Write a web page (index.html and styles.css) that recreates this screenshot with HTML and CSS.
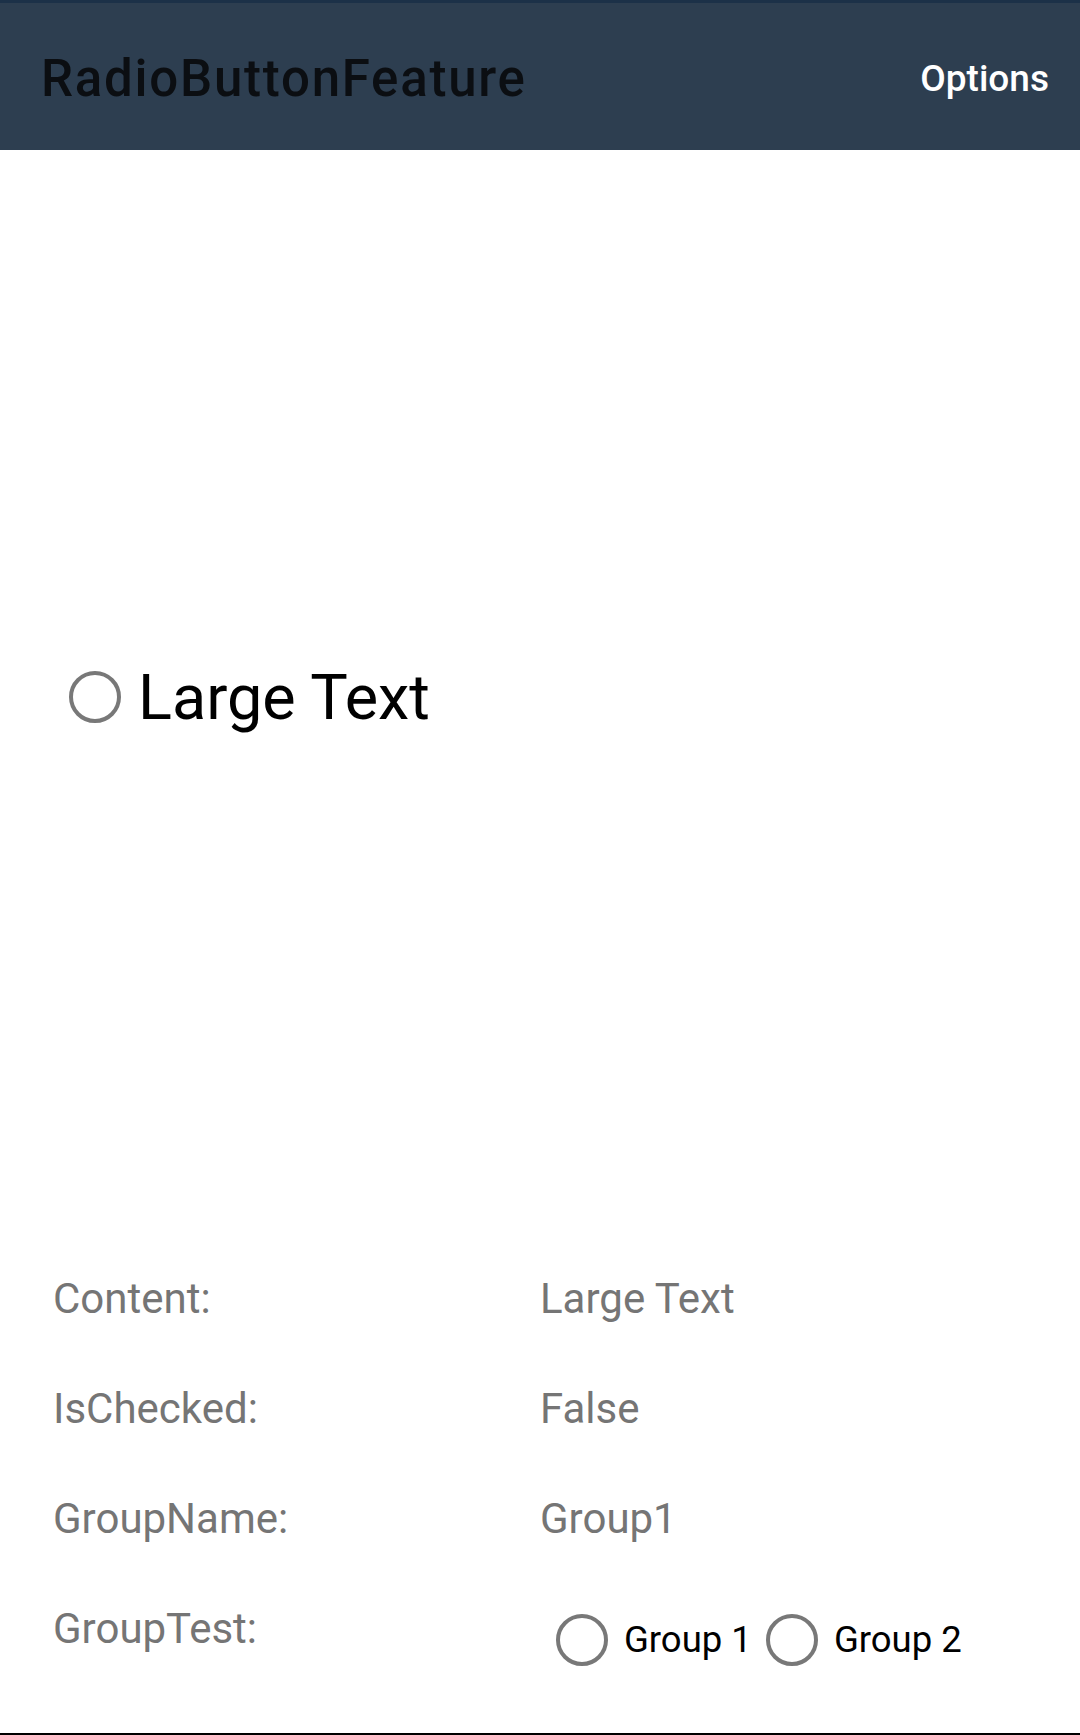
FILE: index.html
```html
<!DOCTYPE html>
<html lang="en">
<head>
<meta charset="utf-8">
<title>RadioButtonFeature</title>
<link rel="stylesheet" href="styles.css">
</head>
<body>
<div class="screen">
  <header class="appbar">
    <div class="appbar-strip"></div>
    <div class="appbar-inner">
      <h1 class="appbar-title">RadioButtonFeature</h1>
      <span class="appbar-action">Options</span>
    </div>
  </header>
  <main class="stage">
    <label class="radio radio-large">
      <span class="radio-circle"></span>
      <span class="radio-label">Large Text</span>
    </label>
  </main>
  <section class="props">
    <div class="prop-name">Content:</div>
    <div class="prop-value">Large Text</div>
    <div class="prop-name">IsChecked:</div>
    <div class="prop-value">False</div>
    <div class="prop-name">GroupName:</div>
    <div class="prop-value">Group1</div>
    <div class="prop-name">GroupTest:</div>
    <div class="prop-value group-row">
      <label class="radio radio-small">
        <span class="radio-circle"></span>
        <span class="radio-label">Group 1</span>
      </label>
      <label class="radio radio-small">
        <span class="radio-circle"></span>
        <span class="radio-label">Group 2</span>
      </label>
    </div>
  </section>
  <div class="spacer"></div>
  <div class="bottom-line"></div>
</div>
</body>
</html>
```
FILE: styles.css
```css
* { box-sizing: border-box; }
html, body {
  margin: 0;
  padding: 0;
  background: #ffffff;
}
body {
  font-family: Roboto, "Noto Sans", "Liberation Sans", sans-serif;
}
.screen {
  width: 1080px;
  height: 1735px;
  display: flex;
  flex-direction: column;
  overflow: hidden;
}
.appbar {
  flex: 0 0 150px;
  display: flex;
  flex-direction: column;
  background: #2d3e50;
}
.appbar-strip {
  height: 3px;
  background: #1c3148;
}
.appbar-inner {
  flex: 1;
  display: flex;
  align-items: center;
  justify-content: space-between;
  padding: 4px 31px 0 41px;
}
.appbar-title {
  margin: 0;
  font-size: 51px;
  font-weight: 500;
  color: #0b0e12;
  letter-spacing: 1.75px;
}
.appbar-action {
  font-size: 37px;
  font-weight: 500;
  color: #ffffff;
}
.stage {
  flex: 1;
  display: flex;
  align-items: center;
  padding-left: 69px;
}
.radio {
  display: flex;
  align-items: center;
}
.radio-circle {
  display: block;
  border-radius: 50%;
  border: 4px solid #787878;
  flex: 0 0 auto;
}
.radio-large .radio-circle {
  width: 52px;
  height: 52px;
  margin-right: 17px;
}
.radio-large .radio-label {
  font-size: 63px;
  color: #000000;
}
.props {
  display: grid;
  grid-template-columns: 487px 1fr;
  grid-auto-rows: 110px;
  padding-left: 53px;
}
.prop-name, .prop-value {
  font-size: 42px;
  line-height: 110px;
  color: #757575;
}
.group-row {
  display: flex;
  align-items: center;
  height: 52px;
  margin-top: 40px;
  padding-left: 16px;
}
.radio-small .radio-circle {
  width: 52px;
  height: 52px;
  margin-right: 16px;
}
.radio-small .radio-label {
  font-size: 36.5px;
  line-height: 1;
  color: #000000;
}
.radio-small + .radio-small {
  margin-left: 14px;
}
.spacer {
  flex: 0 0 49px;
}
.bottom-line {
  flex: 0 0 2px;
  background: #000000;
}
```
